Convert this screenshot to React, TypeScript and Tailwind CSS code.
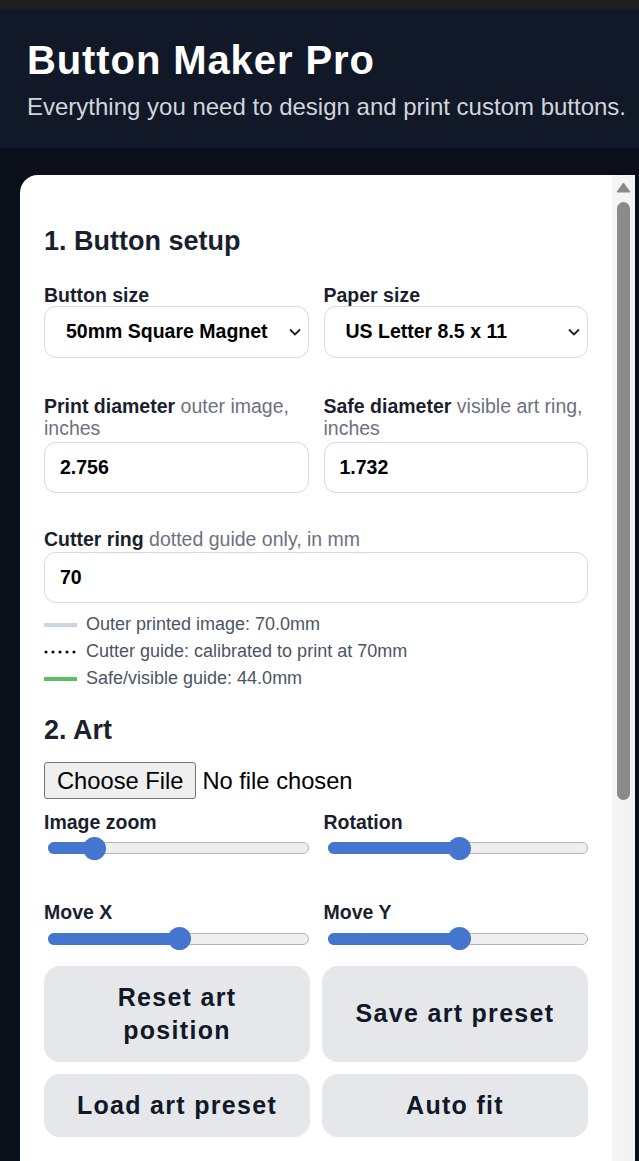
import React from "react";

const sizes = ["50mm Square Magnet", "US Letter 8.5 x 11"];

function Chevron() {
  return (
    <svg width="12" height="8" viewBox="0 0 12 8" className="shrink-0">
      <path d="M1 1.5l5 5 5-5" fill="none" stroke="#1f1f1f" strokeWidth="1.8" />
    </svg>
  );
}

function SelectBox({ label, value }: { label: string; value: string }) {
  return (
    <div className="flex flex-col">
      <label className="text-[19.5px] font-bold leading-[22.4px] text-[#1a1f2e]">{label}</label>
      <div className="flex h-[52px] items-center justify-between rounded-[12px] border border-[#d3d8e2] bg-white pl-[21px] pr-[7px]">
        <span className="text-[19.5px] font-bold text-black">{value}</span>
        <Chevron />
      </div>
    </div>
  );
}

function NumberField({
  label,
  hint,
  rest,
  value,
}: {
  label: string;
  hint: string;
  rest?: string;
  value: string;
}) {
  return (
    <div className="flex flex-col">
      <label className="text-[19.5px] leading-[22.4px] text-[#1a1f2e]">
        <span className="font-bold">{label}</span>{" "}
        <span className="text-[#6b7280]">{hint}</span>
        {rest && (
          <>
            <br />
            <span className="text-[#6b7280]">{rest}</span>
          </>
        )}
      </label>
      <div className="mt-[2px] flex h-[51px] items-center rounded-[12px] border border-[#d3d8e2] bg-white pl-[15px]">
        <span className="text-[19.5px] font-bold text-black">{value}</span>
      </div>
    </div>
  );
}

function Slider({ label, pos }: { label: string; pos: number }) {
  return (
    <div className="flex flex-col">
      <label className="text-[19.5px] font-bold leading-[22.4px] text-[#1a1f2e]">{label}</label>
      <div className="flex h-[30px] items-center pl-[4px]">
        <div className="relative h-[12px] w-[262px] rounded-full border border-[#b3b3b3] bg-[#efefef]">
          <div
            className="absolute -left-px -top-px h-[12px] rounded-full bg-[#4476cf]"
            style={{ width: pos + 2 }}
          />
          <div
            className="absolute top-[-6.5px] h-[23px] w-[23px] rounded-full bg-[#4476cf]"
            style={{ left: pos - 12 }}
          />
        </div>
      </div>
    </div>
  );
}

function LegendRow({ swatch, text }: { swatch: React.ReactNode; text: string }) {
  return (
    <div className="flex items-center">
      <div className="flex w-[33px] items-center">{swatch}</div>
      <span className="ml-[9px] text-[18px] leading-[21px] text-[#4b5563]">{text}</span>
    </div>
  );
}

function ActionButton({ children }: { children: React.ReactNode }) {
  return (
    <button className="flex items-center justify-center rounded-[16px] bg-[#e5e7eb] px-[24px] py-[15px] text-center text-[25px] font-bold leading-[33px] tracking-[1.3px] text-[#111827]">
      {children}
    </button>
  );
}

export default function App() {
  return (
    <div className="h-[1161px] overflow-hidden bg-[#0b0f19] font-['Liberation_Sans',Arial,sans-serif]">
      <div className="h-[9px] bg-[#1f1f1f]" />
      <header className="bg-[#111827] pb-[27px] pl-[27px] pt-[28px]">
        <h1 className="text-[40px] font-bold leading-[46px] tracking-[0.9px] text-white">Button Maker Pro</h1>
        <p className="mt-[10px] text-[24px] leading-[27.6px] text-[#d1d5db]">
          Everything you need to design and print custom buttons.
        </p>
      </header>

      <div className="pl-[20px] pt-[27px]">
        <div className="flex w-[615px] overflow-hidden rounded-tl-[18px] bg-white">
          <main className="flex-1 px-[24px] pb-[60px] pt-[49px]">
            <h2 className="text-[27px] font-bold leading-[34px] text-[#1a1f2e]">1. Button setup</h2>

            <div className="mt-[26px] grid grid-cols-2 gap-x-[15px]">
              <SelectBox label="Button size" value={sizes[0]} />
              <SelectBox label="Paper size" value={sizes[1]} />
            </div>

            <div className="mt-[37px] grid grid-cols-2 gap-x-[15px]">
              <NumberField label="Print diameter" hint="outer image," rest="inches" value="2.756" />
              <NumberField label="Safe diameter" hint="visible art ring," rest="inches" value="1.732" />
            </div>

            <div className="mt-[35px]">
              <NumberField label="Cutter ring" hint="dotted guide only, in mm" value="70" />
            </div>

            <div className="mt-[11px] flex flex-col gap-[6px]">
              <LegendRow swatch={<div className="h-[4px] w-[33px] bg-[#cbd5e1]" />} text="Outer printed image: 70.0mm" />
              <LegendRow
                swatch={
                  <svg width="33" height="4" viewBox="0 0 33 4">
                    {[2, 9, 16, 23, 30].map((cx) => (
                      <circle key={cx} cx={cx} cy="2" r="1.6" fill="#111" />
                    ))}
                  </svg>
                }
                text="Cutter guide: calibrated to print at 70mm"
              />
              <LegendRow swatch={<div className="h-[4px] w-[33px] bg-[#5cbd63]" />} text="Safe/visible guide: 44.0mm" />
            </div>

            <h2 className="mt-[24px] text-[27px] font-bold leading-[34px] text-[#1a1f2e]">2. Art</h2>

            <div className="mt-[15px] flex items-center">
              <span className="flex h-[37px] items-center rounded-[3px] border border-[#767676] bg-[#efefef] px-[12px] pt-[2px] text-[23.7px] text-black">
                Choose File
              </span>
              <span className="ml-[6px] pt-[2px] text-[23.7px] text-black">No file chosen</span>
            </div>

            <div className="mt-[11px] grid grid-cols-2 gap-x-[15px]">
              <Slider label="Image zoom" pos={46} />
              <Slider label="Rotation" pos={131.5} />
            </div>

            <div className="mt-[38px] grid grid-cols-2 gap-x-[15px]">
              <Slider label="Move X" pos={131} />
              <Slider label="Move Y" pos={131.5} />
            </div>

            <div className="mt-[12px] grid grid-cols-2 gap-[12px]">
              <ActionButton>Reset art position</ActionButton>
              <ActionButton>Save art preset</ActionButton>
              <ActionButton>Load art preset</ActionButton>
              <ActionButton>Auto fit</ActionButton>
            </div>
          </main>

          <aside className="flex w-[23px] flex-col items-center bg-gradient-to-r from-[#f6f6f6] to-[#f2f2f2] pt-[7px]">
            <svg width="15" height="11" viewBox="0 0 15 11">
              <path d="M7.5 1L14 10H1z" fill="#8a8a8a" stroke="#8a8a8a" strokeLinejoin="round" />
            </svg>
            <div className="mt-[9px] h-[598px] w-[13px] rounded-full bg-[#8a8a8a]" />
          </aside>
        </div>
      </div>
    </div>
  );
}
